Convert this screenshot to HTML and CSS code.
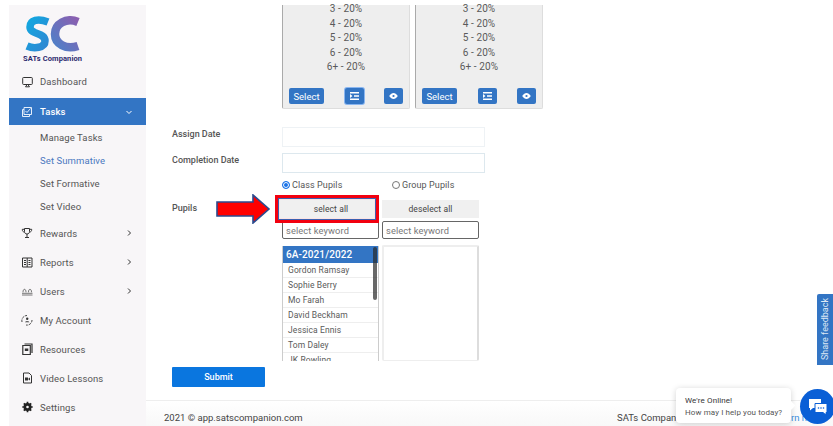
FILE: index.html
```html
<!DOCTYPE html>
<html lang="en">
<head>
<meta charset="utf-8">
<title>Set Summative</title>
<link rel="stylesheet" href="styles.css">
</head>
<body>
<div class="shell">
  <aside class="sidebar">
    <div class="logo">
      <svg class="logo-mark" width="60" height="36" viewBox="0 0 60 36">
        <defs>
          <linearGradient id="gs" x1="0" y1="0" x2="1" y2="1"><stop offset="0" stop-color="#12a8e0"/><stop offset="1" stop-color="#2f86d2"/></linearGradient>
          <linearGradient id="gc" x1="0" y1="1" x2="1" y2="0"><stop offset="0" stop-color="#4f80c8"/><stop offset="1" stop-color="#8a5fb0"/></linearGradient>
        </defs>
        <path d="M24 6 C14 2 6 4 6 11 C6 19 21 16 21 25 C21 32 10 33 3 30" fill="none" stroke="url(#gs)" stroke-width="7.500"/>
        <path d="M54 6 C42 1 31 8 31 18 C31 28 42 34 54 30" fill="none" stroke="url(#gc)" stroke-width="8.500"/>
      </svg>
      <div class="logo-text">SATs Companion</div>
    </div>
    <nav class="nav">
      <a class="nav-item">
        <svg class="nav-icon" viewBox="0 0 12 12"><path d="M2.500 1.500h8a.8.8 0 0 1 .8.8v5.400a.8.8 0 0 1-.8.8h-8a.8.8 0 0 1-.8-.8V2.300a.8.8 0 0 1 .8-.8zM4.500 10.800h4L6.500 8z" fill="none" stroke="#333" stroke-width="1"/></svg>
        <span>Dashboard</span>
      </a>
      <a class="nav-item nav-active">
        <svg class="nav-icon" viewBox="0 0 12 12"><path d="M3 3.500H1.500v7h7V9M3 1.500h7.500v7H3zM4.500 5l1.500 1.500 3.500-4" fill="none" stroke="#e4eefa" stroke-width="1"/></svg>
        <span class="nav-label">Tasks</span>
        <svg class="chev" viewBox="0 0 8 8"><path d="M1.500 3 4 5.500 6.500 3" fill="none" stroke="#fff" stroke-width="1"/></svg>
      </a>
      <div class="subnav">
        <a class="sub-item">Manage Tasks</a>
        <a class="sub-item sub-current">Set Summative</a>
        <a class="sub-item">Set Formative</a>
        <a class="sub-item">Set Video</a>
      </div>
      <a class="nav-item">
        <svg class="nav-icon" viewBox="0 0 12 12"><path d="M3.500 1.500h5v3c0 1.600-1 2.500-2.500 2.500s-2.500-.9-2.500-2.500zM3.500 2.300H1.300c0 1.800.6 2.700 2.300 2.700M8.500 2.300h2.200c0 1.800-.6 2.700-2.300 2.700M6 7v3M4 10.500h4" fill="none" stroke="#333" stroke-width="1"/></svg>
        <span class="nav-label">Rewards</span>
        <svg class="chev" viewBox="0 0 8 8"><path d="M3 1.500 5.500 4 3 6.500" fill="none" stroke="#333" stroke-width="1"/></svg>
      </a>
      <a class="nav-item">
        <svg class="nav-icon" viewBox="0 0 12 12"><path d="M1.500 2h9.500v9H1.500zM6.200 2v9M3 4.500h2M7.500 4.500h2M3 6.500h2M7.500 6.500h2M3 8.500h2M7.500 8.500h2" fill="none" stroke="#333" stroke-width="1"/></svg>
        <span class="nav-label">Reports</span>
        <svg class="chev" viewBox="0 0 8 8"><path d="M3 1.500 5.500 4 3 6.500" fill="none" stroke="#333" stroke-width="1"/></svg>
      </a>
      <a class="nav-item">
        <svg class="nav-icon" viewBox="0 0 12 12"><path d="M1 10h10.500M1 8.300h10.500M2 7.300c0-2 .6-3 1.500-3s1.500 1 1.500 3M7.500 7.300c0-2 .6-3 1.500-3s1.500 1 1.500 3" fill="none" stroke="#555" stroke-width=".8"/></svg>
        <span class="nav-label">Users</span>
        <svg class="chev" viewBox="0 0 8 8"><path d="M3 1.500 5.500 4 3 6.500" fill="none" stroke="#333" stroke-width="1"/></svg>
      </a>
      <a class="nav-item">
        <svg class="nav-icon" viewBox="0 0 12 12"><circle cx="6.200" cy="4.800" r="1.200" fill="#333"/><path d="M4 8.300c0-1.500 4.400-1.500 4.400 0z" fill="#333"/><path d="M1 8a5.200 5.200 0 0 1 5-6.500M11 6a5 5 0 0 1-6 5" fill="none" stroke="#333" stroke-width=".9" stroke-dasharray="2.500 1"/></svg>
        <span>My Account</span>
      </a>
      <a class="nav-item">
        <svg class="nav-icon" viewBox="0 0 12 12"><path d="M3.500 1h7.500v9M1.800 2.500h7.500v9H1.800z" fill="none" stroke="#333" stroke-width="1.200"/><path d="M3.800 5.500h3.500v2.500H3.800z" fill="#333"/></svg>
        <span>Resources</span>
      </a>
      <a class="nav-item">
        <svg class="nav-icon" viewBox="0 0 12 12"><path d="M2.500 1h5.500L10.500 3.500V11h-8z" fill="none" stroke="#333" stroke-width="1"/><path d="M4 5.500h3v3H4zM7 7l2-1.500v3z" fill="#333"/></svg>
        <span>Video Lessons</span>
      </a>
      <a class="nav-item">
        <svg class="nav-icon" viewBox="0 0 12 12"><circle cx="6.500" cy="6" r="2.800" fill="none" stroke="#222" stroke-width="2.400"/><path d="M6.500 .800v10.400M1.300 6h10.400M2.800 2.300l7.400 7.400M10.200 2.300l-7.400 7.400" stroke="#222" stroke-width="1.700"/><circle cx="6.500" cy="6" r="1.300" fill="#f8f6f8"/></svg>
        <span>Settings</span>
      </a>
    </nav>
  </aside>

  <div class="main">
    <main class="form">
      <div class="cards">
        <section class="card">
          <div class="scores"><p>3 - 20%</p><p>4 - 20%</p><p>5 - 20%</p><p>6 - 20%</p><p>6+ - 20%</p></div>
          <div class="card-actions">
            <button class="btn btn-select">Select</button>
            <button class="btn btn-icon btn-focus">
              <svg width="9" height="8" viewBox="0 0 9 8"><path d="M0 0h9v1.400H0zM0 6.600h9V8H0zM4 3.300h5v1.400H4zM0 2l2.500 2L0 6z" fill="#fff"/></svg>
            </button>
            <button class="btn btn-icon">
              <svg width="9" height="6" viewBox="0 0 10 7"><path d="M0 3.500C1.500 1 3.300 0 5 0s3.500 1 5 3.500C8.500 6 6.700 7 5 7S1.500 6 0 3.500z" fill="#fff"/><circle cx="5" cy="3.500" r="1.300" fill="#3375c4"/></svg>
            </button>
          </div>
        </section>
        <section class="card">
          <div class="scores"><p>3 - 20%</p><p>4 - 20%</p><p>5 - 20%</p><p>6 - 20%</p><p>6+ - 20%</p></div>
          <div class="card-actions">
            <button class="btn btn-select">Select</button>
            <button class="btn btn-icon">
              <svg width="9" height="8" viewBox="0 0 9 8"><path d="M0 0h9v1.400H0zM0 6.600h9V8H0zM4 3.300h5v1.400H4zM0 2l2.500 2L0 6z" fill="#fff"/></svg>
            </button>
            <button class="btn btn-icon">
              <svg width="9" height="6" viewBox="0 0 10 7"><path d="M0 3.500C1.500 1 3.300 0 5 0s3.500 1 5 3.500C8.500 6 6.700 7 5 7S1.500 6 0 3.500z" fill="#fff"/><circle cx="5" cy="3.500" r="1.300" fill="#3375c4"/></svg>
            </button>
          </div>
        </section>
      </div>

      <div class="row row-date">
        <label class="row-label">Assign Date</label>
        <div class="date-field date-field-soft"></div>
      </div>
      <div class="row row-date-2">
        <label class="row-label">Completion Date</label>
        <div class="date-field"></div>
      </div>

      <div class="row row-pupils">
        <label class="row-label pupils-label">Pupils</label>
        <div class="pupils">
          <div class="radios">
            <label class="radio radio-class"><span class="dot dot-on"></span>Class Pupils</label>
            <label class="radio"><span class="dot"></span>Group Pupils</label>
          </div>
          <div class="dual">
            <div class="col">
              <button class="pick pick-marked">select all</button>
              <input class="keyword" placeholder="select keyword">
              <div class="list">
                <div class="list-head">6A-2021/2022</div>
                <div class="list-row">Gordon Ramsay</div>
                <div class="list-row">Sophie Berry</div>
                <div class="list-row">Mo Farah</div>
                <div class="list-row">David Beckham</div>
                <div class="list-row">Jessica Ennis</div>
                <div class="list-row">Tom Daley</div>
                <div class="list-row">JK Rowling</div>
                <span class="thumb"></span>
              </div>
            </div>
            <div class="col">
              <button class="pick">deselect all</button>
              <input class="keyword" placeholder="select keyword">
              <div class="list list-empty"></div>
            </div>
          </div>
        </div>
      </div>

      <button class="submit">Submit</button>
    </main>
    <footer class="footer">
      <span>2021 © app.satscompanion.com</span>
      <span class="footer-right">SATs Companion <a class="footer-link">Learn more</a></span>
    </footer>
  </div>
</div>

<svg class="arrow" width="56" height="30" viewBox="0 0 56 30">
  <path d="M1 8h36V1l16 14-16 14v-7H1z" fill="#f00" stroke="#2b4a8e" stroke-width="1.600"/>
</svg>

<button class="feedback"><span>Share feedback</span></button>

<div class="chat-bubble">
  <div class="chat-title">We're Online!</div>
  <div class="chat-sub">How may I help you today?</div>
</div>
<div class="chat-fab">
  <svg width="20" height="18" viewBox="0 0 20 18"><path d="M1 1h12v9H5l-3 2.500V10H1z" fill="#fff"/><path d="M7 5.500h12v9h-1V17l-3-2.500H7z" fill="#fff" stroke="#0a5fd6"/><circle cx="10.500" cy="10" r=".8" fill="#0a5fd6"/><circle cx="13" cy="10" r=".8" fill="#0a5fd6"/><circle cx="15.500" cy="10" r=".8" fill="#0a5fd6"/></svg>
</div>
</body>
</html>
```

FILE: styles.css
```css
* { box-sizing: border-box; }
html, body { margin: 0; height: 426px; overflow: hidden; background: #fff; }
body { font-family: Roboto, "Liberation Sans", sans-serif; font-size: 9.500px; color: #555; position: relative; }
p { margin: 0; }
button { font-family: inherit; cursor: pointer; }

.shell { display: flex; height: 426px; padding: 5px 0 0 9px; }

/* sidebar */
.sidebar { width: 137px; flex: none; background: #f8f6f8; margin-bottom: -5px; }
.logo { height: 62px; padding: 11px 0 0 14px; }
.logo-mark { display: block; margin-left: 1px; }
.logo-text { font-size: 7.500px; font-weight: 700; color: #2d2a6e; margin-top: 2px; line-height: 9px; white-space: nowrap; letter-spacing: .1px; }
.nav { display: flex; flex-direction: column; }
.nav-item { height: 29px; display: flex; align-items: center; padding-left: 12px; color: #555; letter-spacing: .1px; }
.nav-icon { width: 12px; height: 12px; flex: none; margin-right: 7px; }
.nav-label { flex: 1; }
.chev { width: 8px; height: 8px; margin-right: 13px; }
.nav-active { height: 27px; margin-top: 2px; background: #3375c4; color: #fff; font-weight: 500; }
.subnav { padding: .5px 0 1px; display: flex; flex-direction: column; }
.sub-item { height: 23px; line-height: 23px; padding-left: 31px; color: #555; letter-spacing: .1px; }
.sub-current { color: #4a78c0; }

/* main */
.main { flex: 1; display: flex; flex-direction: column; min-width: 0; }
.form { flex: 1; padding-left: 26px; }
.cards { display: flex; gap: 5px; margin-left: 110px; height: 104px; }
.card { width: 128px; background: #eee; border: 1px solid #ddd; border-left-color: #aaa; border-top: 0; border-radius: 0 0 2px 2px; display: flex; flex-direction: column; justify-content: space-between; padding: 0 6px 4px; }
.scores { text-align: center; font-size: 10px; line-height: 14.500px; color: #5a5a5a; letter-spacing: .1px; margin-top: -3px; }
.card-actions { display: flex; justify-content: space-between; align-items: center; }
.btn { height: 16px; border: 0; border-radius: 2px; background: #3375c4; color: #fff; padding: 0; display: flex; align-items: center; justify-content: center; }
.btn-select { width: 35px; font-size: 9.500px; }
.btn-icon { width: 19px; }
.btn-focus { box-shadow: 0 0 0 1px #8ab6f0; }

.row { display: flex; }
.row-label { width: 110px; flex: none; font-size: 9px; font-weight: 500; color: #555; line-height: 12px; padding-top: 1px; }
.row-date { margin-top: 18px; }
.row-date-2 { margin-top: 6px; }
.date-field { width: 203px; height: 20px; border: 1px solid #dde8ee; background: #fff; }
.date-field-soft { border-color: #eef2f5; }
.pupils-label { padding-top: 23px; }

.row-pupils { margin-top: 6px; }
.pupils { width: 200px; }
.radios { display: flex; height: 12px; align-items: center; font-size: 9px; color: #555; }
.radio { display: flex; align-items: center; gap: 2px; letter-spacing: .1px; }
.radio-class { width: 110px; }
.dot { width: 8px; height: 8px; border-radius: 50%; border: 1px solid #777; background: #fff; }
.dot-on { border-color: #1a73e8; box-shadow: inset 0 0 0 1px #fff; background: #1a73e8; }

.dual { display: flex; gap: 3px; margin-top: 9px; }
.col { width: 97px; display: flex; flex-direction: column; }
.pick { height: 18px; border: 0; background: #f0f0f0; color: #444; font-size: 8.500px; padding: 0; letter-spacing: .1px; }
.pick-marked { position: relative; width: 94px; margin-left: -2px; padding-left: 8px; box-shadow: 0 0 0 1px #fbe4e4, 0 0 0 2px #3a5fb0, 0 0 0 5px #f2000f; }
.keyword { height: 18px; margin-top: 3px; border: 1px solid #666; border-radius: 2px; background: #fff; padding: 0 3px; font: 9.300px Roboto, sans-serif; letter-spacing: .1px; }
.keyword::placeholder { color: #777; opacity: 1; }
.list { position: relative; height: 115px; margin-top: 7px; border: 1px solid #ccc; border-width: 0 1px; overflow: hidden; background: #fff; }
.list-empty { height: 116px; margin-top: 6px; border: 2px solid #eee; border-right-color: #ddd; border-radius: 2px; border-bottom-width: 1px; }
.list-head { height: 17px; line-height: 18px; background: #3375c4; color: #fff; font-size: 10px; font-weight: 500; padding-left: 3px; letter-spacing: .1px; }
.list-row { height: 15px; line-height: 14px; border-bottom: 1px solid #eee; padding-left: 5px; font-size: 8.500px; color: #5a5a5a; letter-spacing: .1px; white-space: nowrap; }
.thumb { position: absolute; right: 1px; top: 1px; width: 4px; height: 53px; border-radius: 2px; background: rgba(40,40,40,.7); }

.submit { display: block; width: 93px; height: 20px; margin-top: 6px; border: 0; border-radius: 1px; background: #0a76df; color: #fff; font-size: 9px; font-weight: 500; }

.footer { height: 26px; flex: none; border-top: 1px solid #eee; background: linear-gradient(#fff, #f8f8f8); display: flex; justify-content: space-between; align-items: center; padding: 8px 0 0 18px; white-space: nowrap; font-size: 9.500px; color: #444; overflow: hidden; }
.footer-right { width: 216px; flex: none; }
.footer-link { color: #3a8ee0; margin-left: 84px; }

/* overlays */
.arrow { position: absolute; left: 216px; top: 194px; }
.feedback { position: absolute; right: 0; top: 294px; width: 16px; height: 71px; border: 0; border-radius: 2px 0 0 0; background: #3375c4; color: #dde8f5; padding: 0; font-size: 9px; display: flex; align-items: center; justify-content: center; }
.feedback span { writing-mode: vertical-rl; transform: rotate(180deg); white-space: nowrap; }
.chat-bubble { position: absolute; left: 676px; top: 388px; width: 115px; height: 35px; background: #fff; border-radius: 4px; box-shadow: 0 1px 6px rgba(0,0,0,.18); padding: 7px 0 0 9px; font-size: 8px; color: #555; letter-spacing: .1px; }
.chat-bubble::after { content: ""; position: absolute; right: -3px; top: 14px; width: 7px; height: 7px; background: #fff; transform: rotate(45deg); }
.chat-title { color: #333; line-height: 11px; }
.chat-sub { line-height: 11px; margin-top: 1px; }
.chat-fab { position: absolute; left: 800px; top: 389px; width: 35px; height: 35px; border-radius: 50%; background: #0a5fd6; display: flex; align-items: center; justify-content: center; }
```
